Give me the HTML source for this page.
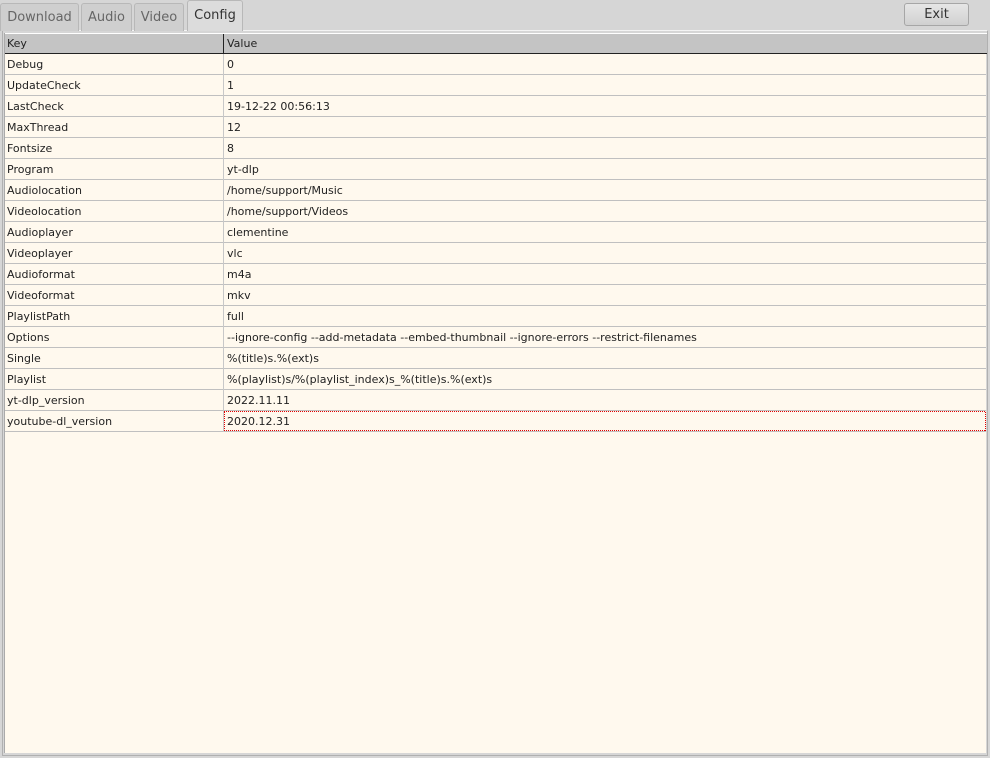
<!DOCTYPE html>
<html><head><style>
*{margin:0;padding:0;box-sizing:border-box}
body{width:990px;height:758px;background:#d6d6d6;font-family:"DejaVu Sans","Liberation Sans",sans-serif;position:relative;overflow:hidden;color:#222}
.tab{position:absolute;top:3px;height:28px;border:1px solid #b8b8b8;border-bottom:none;border-radius:3px 3px 0 0;background:#cfcfcf;color:#666;font-size:13px;line-height:28px;text-align:center}
.tab.act{top:0;height:31px;background:#dcdcdc;color:#333;line-height:30px;z-index:2}
.panel{position:absolute;left:2px;top:30px;width:986px;height:726px;border:1px solid #b0b0b0;border-top-color:#f4f4f4;background:#d6d6d6}
.tbl{position:absolute;left:4px;top:33px;width:982px;height:720px;background:#fff9ee;border-left:1px solid #aaa}
.hdr{position:absolute;left:0;top:0;width:982px;height:21px;background:#c4c4c4;border-bottom:1px solid #222;border-top:1px solid #fff;font-size:11px;line-height:19px}
.hdr span{position:absolute;top:0}
.row{position:absolute;left:0;width:981px;height:21px;border-bottom:1px solid #c0c0c0;font-size:11px;line-height:22px}
.row span{position:absolute;top:0}
.k{left:2px}.v{left:222px}
.div{position:absolute;left:218px;top:0;width:1px;height:20px;background:#222}
.row .d{position:absolute;left:218px;top:0;width:1px;height:21px;background:#c8c8c8}
.exit{position:absolute;left:904px;top:3px;width:65px;height:23px;border:1px solid #a6a6a6;border-radius:3px;background:linear-gradient(#e6e6e6,#d0d0d0);font-size:13px;line-height:21px;text-align:center;color:#333}
.foc{position:absolute;left:219px;top:0;width:762px;height:20px;
background:
repeating-linear-gradient(90deg,#e00000 0 1px,transparent 1px 2px) top/100% 1px no-repeat,
repeating-linear-gradient(90deg,#e00000 0 1px,transparent 1px 2px) bottom/100% 1px no-repeat,
repeating-linear-gradient(0deg,#e00000 0 1px,transparent 1px 2px) left/1px 100% no-repeat,
repeating-linear-gradient(0deg,#e00000 0 1px,transparent 1px 2px) right/1px 100% no-repeat}
</style></head><body>
<div class="panel"></div>
<div class="tab" style="left:0;width:79px">Download</div>
<div class="tab" style="left:81px;width:51px">Audio</div>
<div class="tab" style="left:134px;width:50px">Video</div>
<div class="tab act" style="left:187px;width:56px">Config</div>
<div class="exit">Exit</div>
<div class="tbl">
<div class="hdr"><span style="left:2px">Key</span><div class="div"></div><span style="left:222px">Value</span></div>
<div class="row" style="top:21px"><div class="d"></div><span class="k">Debug</span><span class="v">0</span></div>
<div class="row" style="top:42px"><div class="d"></div><span class="k">UpdateCheck</span><span class="v">1</span></div>
<div class="row" style="top:63px"><div class="d"></div><span class="k">LastCheck</span><span class="v">19-12-22 00:56:13</span></div>
<div class="row" style="top:84px"><div class="d"></div><span class="k">MaxThread</span><span class="v">12</span></div>
<div class="row" style="top:105px"><div class="d"></div><span class="k">Fontsize</span><span class="v">8</span></div>
<div class="row" style="top:126px"><div class="d"></div><span class="k">Program</span><span class="v">yt-dlp</span></div>
<div class="row" style="top:147px"><div class="d"></div><span class="k">Audiolocation</span><span class="v">/home/support/Music</span></div>
<div class="row" style="top:168px"><div class="d"></div><span class="k">Videolocation</span><span class="v">/home/support/Videos</span></div>
<div class="row" style="top:189px"><div class="d"></div><span class="k">Audioplayer</span><span class="v">clementine</span></div>
<div class="row" style="top:210px"><div class="d"></div><span class="k">Videoplayer</span><span class="v">vlc</span></div>
<div class="row" style="top:231px"><div class="d"></div><span class="k">Audioformat</span><span class="v">m4a</span></div>
<div class="row" style="top:252px"><div class="d"></div><span class="k">Videoformat</span><span class="v">mkv</span></div>
<div class="row" style="top:273px"><div class="d"></div><span class="k">PlaylistPath</span><span class="v">full</span></div>
<div class="row" style="top:294px"><div class="d"></div><span class="k">Options</span><span class="v">--ignore-config --add-metadata --embed-thumbnail --ignore-errors --restrict-filenames</span></div>
<div class="row" style="top:315px"><div class="d"></div><span class="k">Single</span><span class="v">%(title)s.%(ext)s</span></div>
<div class="row" style="top:336px"><div class="d"></div><span class="k">Playlist</span><span class="v">%(playlist)s/%(playlist_index)s_%(title)s.%(ext)s</span></div>
<div class="row" style="top:357px"><div class="d"></div><span class="k">yt-dlp_version</span><span class="v">2022.11.11</span></div>
<div class="row" style="top:378px"><div class="d"></div><span class="k">youtube-dl_version</span><span class="v">2020.12.31</span><div class="foc"></div></div>
</div>
</body></html>
